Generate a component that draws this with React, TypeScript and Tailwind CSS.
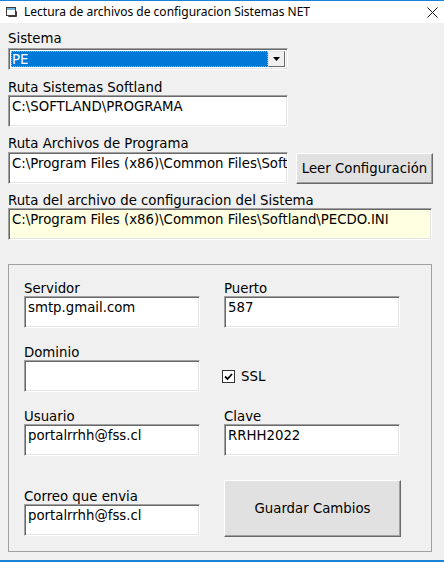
import React from 'react';

const font = { fontFamily: '"DejaVu Sans", sans-serif' };

// Caja de texto hundida estilo WinForms
function TextBox({ value, className = '', yellow = false }: { value: string; className?: string; yellow?: boolean }) {
  return (
    <div
      className={`h-[32px] border border-t-[#a0a0a0] border-l-[#a0a0a0] border-r-white border-b-white shadow-[inset_1px_1px_0_#696969,inset_-1px_-1px_0_#e3e3e3] pl-[3px] pt-[3px] text-[13.3px] leading-[15px] text-black whitespace-nowrap overflow-hidden ${yellow ? 'bg-[#ffffe1]' : 'bg-white'} ${className}`}
    >
      {value}
    </div>
  );
}

function Label({ text, className = '' }: { text: string; className?: string }) {
  return <div className={`h-[15px] text-[13.3px] leading-[15px] text-black whitespace-nowrap ${className}`}>{text}</div>;
}

function Button({ text, className = '' }: { text: string; className?: string }) {
  return (
    <div
      className={`flex items-center justify-center bg-[#e1e1e1] border border-t-white border-l-white border-r-[#696969] border-b-[#696969] shadow-[inset_-1px_-1px_0_#a0a0a0,inset_1px_1px_0_#e3e3e3] text-[13.3px] leading-[15px] text-black whitespace-nowrap ${className}`}
    >
      {text}
    </div>
  );
}

function FormIcon() {
  return (
    <svg width="13" height="12" viewBox="0 0 13 12">
      <rect x="1.5" y="1.5" width="9" height="8" fill="#ffffff" stroke="#3c3c3c" />
      <rect x="2" y="2" width="8" height="2" fill="#6fb3d9" />
      <path d="M10.5 4.5 L11.5 5.5 L11.5 10.5 L3.5 10.5 L2.5 9.5" fill="none" stroke="#3c3c3c" />
    </svg>
  );
}

export default function App() {
  return (
    <div className="w-[444px] h-[562px] bg-[#f0f0f0] border-t border-b-2 border-[#1883d7] flex flex-col overflow-hidden" style={font}>
      {/* Barra de título */}
      <div className="h-[22px] bg-white flex items-center pl-[5px] pr-[6px]">
        <FormIcon />
        <span className="ml-[6px] text-[12px] text-black" style={{ fontFamily: '"Noto Sans", sans-serif' }}>
          Lectura de archivos de configuracion Sistemas NET
        </span>
        <svg className="ml-auto" width="11" height="11" viewBox="0 0 11 11">
          <path d="M0.5 0.5 L10.5 10.5 M10.5 0.5 L0.5 10.5" stroke="#111" strokeWidth="1" />
        </svg>
      </div>

      {/* Cuerpo */}
      <div className="flex-1 px-[8px]">
        <Label text="Sistema" className="mt-[8px]" />
        {/* Combo */}
        <div className="mt-[2px] w-[280px] h-[22px] border border-t-[#a0a0a0] border-l-[#a0a0a0] border-r-white border-b-white shadow-[inset_1px_1px_0_#696969,inset_-1px_-1px_0_#e3e3e3] bg-white flex p-[2px]">
          <div className="flex-1 bg-[#0078d7] outline-1 outline-dotted outline-[#e8a040] -outline-offset-1 text-white text-[13.3px] leading-[15px] pl-[1px] pt-[1px]">
            PE
          </div>
          <div className="w-[17px] bg-[#f0f0f0] border border-t-[#e3e3e3] border-l-[#e3e3e3] border-r-[#696969] border-b-[#696969] flex items-center justify-center">
            <svg width="7" height="4" viewBox="0 0 7 4">
              <path d="M0 0 H7 L3.5 4 Z" fill="#000" />
            </svg>
          </div>
        </div>

        <Label text="Ruta Sistemas Softland" className="mt-[10px]" />
        <TextBox value="C:\SOFTLAND\PROGRAMA" className="w-[280px]" />

        <Label text="Ruta Archivos de Programa" className="mt-[9px]" />
        <div className="mt-[1px] flex items-start">
          <TextBox value="C:\Program Files (x86)\Common Files\Soft" className="w-[280px]" />
          <Button text="Leer Configuración" className="ml-[8px] mt-[1px] w-[137px] h-[31px]" />
        </div>

        <Label text="Ruta del archivo de configuracion del Sistema" className="mt-[9px]" />
        <TextBox value="C:\Program Files (x86)\Common Files\Softland\PECDO.INI" yellow className="w-[424px]" />

        {/* Grupo */}
        <div className="mt-[24px] w-[424px] h-[288px] border border-[#a0a0a0] pl-[15px] pt-[16px]">
          <div className="flex">
            <div className="w-[176px]">
              <Label text="Servidor" />
              <TextBox value="smtp.gmail.com" />
            </div>
            <div className="ml-[24px] w-[176px]">
              <Label text="Puerto" />
              <TextBox value="587" />
            </div>
          </div>

          <div className="flex mt-[17px]">
            <div className="w-[176px]">
              <Label text="Dominio" />
              <TextBox value="" />
            </div>
            <div className="ml-[22px] mt-[25px] flex items-center h-[13px]">
              <div className="w-[13px] h-[13px] border border-[#333] bg-white flex items-center justify-center">
                <svg width="9" height="8" viewBox="0 0 9 8">
                  <path d="M1 3.5 L3.5 6 L8 1" fill="none" stroke="#000" strokeWidth="1.8" />
                </svg>
              </div>
              <span className="ml-[6px] text-[13.3px] leading-[15px]">SSL</span>
            </div>
          </div>

          <div className="flex mt-[17px]">
            <div className="w-[176px]">
              <Label text="Usuario" />
              <TextBox value="portalrrhh@fss.cl" />
            </div>
            <div className="ml-[24px] w-[176px]">
              <Label text="Clave" />
              <TextBox value="RRHH2022" />
            </div>
          </div>

          <div className="flex mt-[24px]">
            <div className="w-[176px] pt-[9px]">
              <Label text="Correo que envia" />
              <TextBox value="portalrrhh@fss.cl" />
            </div>
            <Button text="Guardar Cambios" className="ml-[24px] w-[177px] h-[57px]" />
          </div>
        </div>
      </div>
    </div>
  );
}
